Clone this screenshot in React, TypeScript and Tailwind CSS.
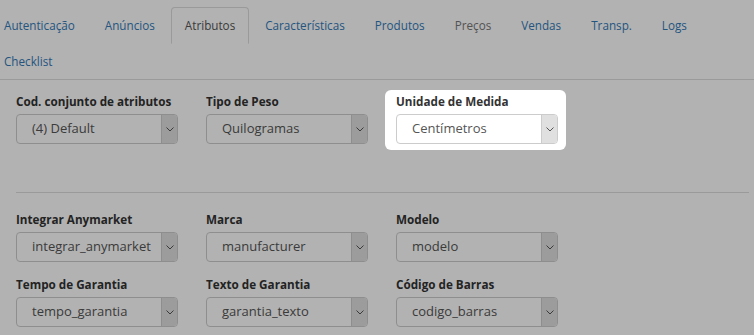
import React from 'react';

const tabs = [
  { label: 'Autenticação' },
  { label: 'Anúncios' },
  { label: 'Atributos', active: true },
  { label: 'Características' },
  { label: 'Produtos' },
  { label: 'Preços', muted: true },
  { label: 'Vendas' },
  { label: 'Transp.' },
  { label: 'Logs' },
  { label: 'Checklist' },
];

function Chevron() {
  return (
    <svg width="8" height="5" viewBox="0 0 8 5" fill="none">
      <path d="M0.5 0.5 L4 4 L7.5 0.5" stroke="#555" strokeWidth="1" />
    </svg>
  );
}

function Field({ label, value }: { label: string; value: string }) {
  return (
    <div className="w-[162px]">
      <div className="font-bold text-[#333] text-[11.7px] leading-[18px] mb-[4px] whitespace-nowrap">{label}</div>
      <div className="flex h-[30px] border border-[#ccc] rounded-[4px] bg-white overflow-hidden">
        <div className="flex-1 flex items-center pl-[15px] text-[13px] text-[#555] whitespace-nowrap overflow-hidden">
          {value}
        </div>
        <div className="w-[16px] flex items-center justify-center bg-[#e0e0e0] border-l border-[#ccc]">
          <Chevron />
        </div>
      </div>
    </div>
  );
}

export default function App() {
  return (
    <div className="relative min-h-screen bg-white font-['Open_Sans',sans-serif] text-[12px] overflow-hidden">
      {/* Tabs */}
      <ul className="flex flex-wrap border-b border-[#ddd] pt-[7px] -ml-[10px]">
        {tabs.map((t) => (
          <li key={t.label} className="-mb-px mr-[2px]">
            <a
              className={
                t.active
                  ? 'block px-[13px] py-[9px] text-[11.7px] leading-[17px] rounded-t-[4px] border border-[#ddd] border-b-transparent bg-white text-[#555]'
                  : t.muted
                  ? 'block px-[13px] py-[9px] text-[11.7px] leading-[17px] border border-transparent text-[#777]'
                  : 'block px-[13px] py-[9px] text-[11.7px] leading-[17px] border border-transparent text-[#337ab7]'
              }
            >
              {t.label}
            </a>
          </li>
        ))}
      </ul>

      {/* Form */}
      <div className="pl-[16px] pr-[5px] pt-[12px]">
        <div className="flex gap-[28px]">
          <Field label="Cod. conjunto de atributos" value="(4) Default" />
          <Field label="Tipo de Peso" value="Quilogramas" />
          <div className="relative z-20 bg-white rounded-[6px] -ml-[11px] pl-[11px] -mr-[8px] pr-[8px] -mt-[2px] pt-[2px] pb-[6px]">
            <Field label="Unidade de Medida" value="Centímetros" />
          </div>
        </div>

        <div className="mt-[42px] border-t border-[#ddd]" />

        <div className="pt-[17px] flex flex-col gap-[13px]">
          <div className="flex gap-[28px]">
            <Field label="Integrar Anymarket" value="integrar_anymarket" />
            <Field label="Marca" value="manufacturer" />
            <Field label="Modelo" value="modelo" />
          </div>
          <div className="flex gap-[28px]">
            <Field label="Tempo de Garantia" value="tempo_garantia" />
            <Field label="Texto de Garantia" value="garantia_texto" />
            <Field label="Código de Barras" value="codigo_barras" />
          </div>
        </div>
      </div>

      {/* Tour overlay */}
      <div className="absolute inset-0 z-10 bg-black/30" />
    </div>
  );
}
